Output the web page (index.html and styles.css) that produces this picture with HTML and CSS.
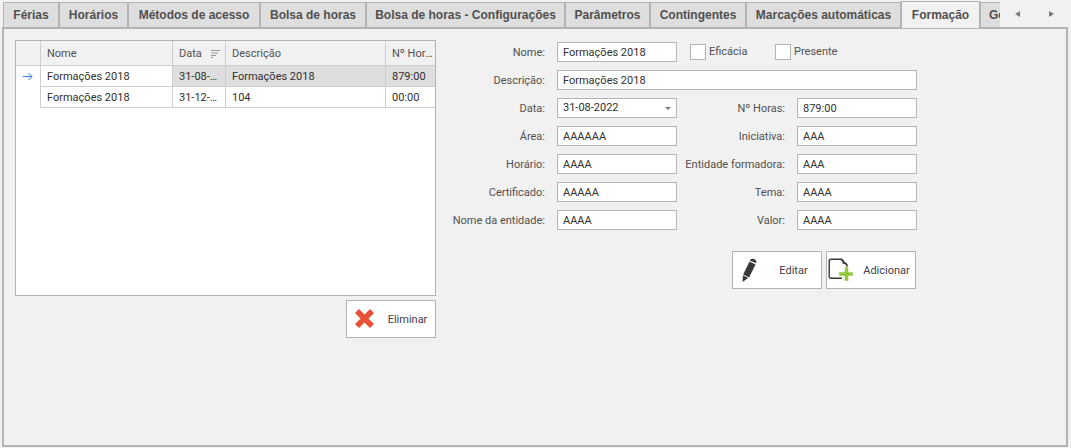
FILE: index.html
```html
<!DOCTYPE html>
<html lang="pt">
<head>
<meta charset="utf-8">
<title>Formação</title>
<link rel="stylesheet" href="styles.css">
</head>
<body>
<nav class="tabbar">
  <div class="tabs" role="tablist">
    <button class="tab" role="tab">Férias</button>
    <button class="tab" role="tab">Horários</button>
    <button class="tab" role="tab">Métodos de acesso</button>
    <button class="tab" role="tab">Bolsa de horas</button>
    <button class="tab" role="tab">Bolsa de horas - Configurações</button>
    <button class="tab" role="tab">Parâmetros</button>
    <button class="tab" role="tab">Contingentes</button>
    <button class="tab" role="tab">Marcações automáticas</button>
    <button class="tab tab-active" role="tab" aria-selected="true">Formação</button>
    <button class="tab tab-last" role="tab">Geral</button>
  </div>
  <div class="scrollers">
    <button class="scroller" aria-label="Anterior"><svg width="5" height="6" viewBox="0 0 5 6"><path d="M5 0v6L0 3z" fill="#7a7a7a"/></svg></button>
    <button class="scroller" aria-label="Seguinte"><svg width="5" height="6" viewBox="0 0 5 6"><path d="M0 0v6l5-3z" fill="#7a7a7a"/></svg></button>
  </div>
</nav>
<main class="panel">
  <section class="list">
    <div class="grid-box">
      <table class="grid">
        <colgroup><col class="c-mark"><col class="c-nome"><col class="c-data"><col class="c-desc"><col class="c-horas"></colgroup>
        <thead>
          <tr><th></th><th>Nome</th><th><span class="sorted">Data <svg width="9" height="8" viewBox="0 0 9 8"><path d="M0 .5h9M0 3h7M0 5.500h5M0 7.500h2" stroke="#999"/></svg></span></th><th>Descrição</th><th>Nº Horas</th></tr>
        </thead>
        <tbody>
          <tr class="selected"><td class="mark"><svg width="10" height="9" viewBox="0 0 10 9"><path d="M0 4.500h9M5.500 1L9 4.500 5.500 8" fill="none" stroke="#2f7bd9"/></svg></td><td class="focused">Formações 2018</td><td>31-08-2022</td><td>Formações 2018</td><td>879:00</td></tr>
          <tr><td class="mark"></td><td>Formações 2018</td><td>31-12-2018</td><td>104</td><td>00:00</td></tr>
        </tbody>
      </table>
    </div>
    <button class="action">
      <svg class="icon" width="24" height="24" viewBox="0 0 24 24"><path d="M3 6l4-4 5.500 5.500L18 2l4 4-5.500 5.500L22 17l-4 4-5.500-5.500L7 21l-4-4 5.500-5.500z" fill="#e95136"/></svg>
      <span>Eliminar</span>
    </button>
  </section>
  <form class="form">
    <div class="fields">
      <label for="nome">Nome:</label><input id="nome" class="field" value="Formações 2018">
      <div class="checks">
        <label class="check"><input type="checkbox" class="tick">Eficácia</label>
        <label class="check"><input type="checkbox" class="tick">Presente</label>
      </div>
      <label for="desc">Descrição:</label><input id="desc" class="field wide" value="Formações 2018">
      <label for="data">Data:</label><div class="combo"><select id="data" class="field"><option>31-08-2022</option></select></div>
      <label for="horas">Nº Horas:</label><input id="horas" class="field" value="879:00">
      <label for="area">Área:</label><input id="area" class="field" value="AAAAAA">
      <label for="inic">Iniciativa:</label><input id="inic" class="field" value="AAA">
      <label for="horario">Horário:</label><input id="horario" class="field" value="AAAA">
      <label for="ent">Entidade formadora:</label><input id="ent" class="field" value="AAA">
      <label for="cert">Certificado:</label><input id="cert" class="field" value="AAAAA">
      <label for="tema">Tema:</label><input id="tema" class="field" value="AAAA">
      <label for="nent">Nome da entidade:</label><input id="nent" class="field" value="AAAA">
      <label for="valor">Valor:</label><input id="valor" class="field" value="AAAA">
    </div>
    <div class="actions">
      <button type="button" class="action">
        <svg class="icon" width="24" height="26" viewBox="0 0 24 26"><path d="M12.500 2.500C13.500 .5 19 2.500 18.500 5L18 6 11.800 3.800zM11.400 4.800l6.200 2.400-6.500 13.300-5.900-3zM4.900 18.300l5.300 2.800L4.500 25z" fill="#383838"/></svg>
        <span>Editar</span>
      </button>
      <button type="button" class="action action-add">
        <svg class="icon" width="26" height="24" viewBox="0 0 26 24"><path d="M14 20.300H3q-1.800 0-1.800-1.800V3Q1.200 1.200 3 1.200H13L19 7v3" fill="none" stroke="#383838" stroke-width="1.400"/><path d="M13 1.200q3 1 2.300 3.800 2.700-.3 3.700 2" fill="none" stroke="#383838" stroke-width="1.400"/><path d="M16.500 9h4v5H25v4h-4.500v5h-4v-5H11v-4h5.500z" fill="#93c83e" stroke="#fff" stroke-width="0.500"/></svg>
        <span>Adicionar</span>
      </button>
    </div>
  </form>
</main>
</body>
</html>
```
FILE: styles.css
```css
* { box-sizing: border-box; }

body {
  margin: 0;
  padding: 1px 3px 1px 2px;
  min-height: 100vh;
  display: flex;
  flex-direction: column;
  background: #f1f1f1;
  color: #505050;
  font: 11px/14px Roboto, "Liberation Sans", sans-serif;
}

button, input, select { font: inherit; color: inherit; border-radius: 0; }
svg { display: block; }

.tabbar {
  display: flex;
  height: 27px;
  padding-left: 1px;
  margin-bottom: -1px;
  position: relative;
}

.tabs {
  flex: 1;
  min-width: 0;
  display: grid;
  grid-template-columns: 56px 69px 132px 106px 199px 85px 96px 155px 79px 60px;
  overflow: hidden;
}

.tab {
  margin: 1px 0 0;
  padding: 0;
  border: 1px solid #b3b3b3;
  background: #dedede;
  font: bold 12px/14px "Liberation Sans", Arial, sans-serif;
  white-space: nowrap;
}

.tab-active { margin-top: 0; border-bottom: 0; background: #f1f1f1; }
.tab-last { padding-left: 8px; text-align: left; }

.scrollers { display: flex; width: 68px; }

.scroller {
  flex: 1;
  display: flex;
  align-items: center;
  justify-content: center;
  padding: 0 0 2px;
  border: 0;
  background: none;
}

.panel {
  flex: 1;
  display: flex;
  align-items: flex-start;
  gap: 16px;
  padding: 11px;
  border: 2px solid #b3b3b3;
}

.list { display: flex; flex-direction: column; align-items: flex-end; gap: 4px; width: 421px; }
.grid-box { width: 100%; min-height: 256px; border: 1px solid #b3b3b3; background: #fff; }

.grid { width: 100%; table-layout: fixed; border-spacing: 0; color: #303030; }
.c-mark { width: 25px; }
.c-nome { width: 132px; }
.c-data { width: 53px; }
.c-desc { width: 160px; }

.grid th, .grid td {
  height: 21px;
  padding: 2px 5px 0 6px;
  border-right: 1px solid #cdcdcd;
  border-bottom: 1px solid #cdcdcd;
  font-weight: normal;
  text-align: left;
  overflow: hidden;
  white-space: nowrap;
  text-overflow: ellipsis;
}

.grid th { height: 25px; background: #f1f1f1; color: #505050; }
.grid th:last-child, .grid td:last-child { border-right: 0; padding-right: 1px; }
.grid .mark { border-bottom: 0; padding: 0 7px; background: #fff; }
.selected td { background: #dedede; }
.selected .focused { background: #fff; }
.sorted { display: flex; align-items: center; justify-content: space-between; }

.action {
  display: flex;
  align-items: center;
  gap: 4px;
  width: 90px;
  height: 38px;
  padding: 0 0 0 5px;
  border: 1px solid #b3b3b3;
  background: #fff;
  color: #404048;
}

.action span { flex: 1; padding-top: 1px; text-align: center; }
.action-add { padding-left: 1px; }

.form { padding-top: 2px; }

.fields {
  display: grid;
  grid-template-columns: 93px 120px 96px 120px;
  column-gap: 12px;
  grid-auto-rows: 20px;
  row-gap: 8px;
  align-items: center;
}

.fields > label { justify-self: end; padding-top: 1px; white-space: nowrap; }

.field {
  width: 100%;
  height: 20px;
  padding: 0 5px;
  border: 1px solid #b3b3b3;
  background: #fff;
  color: #303030;
  appearance: none;
}

.wide { grid-column: 2 / -1; }
.checks { grid-column: 3 / -1; display: flex; padding-left: 1px; }
.check { display: flex; align-items: center; gap: 3px; width: 85px; }

.tick {
  appearance: none;
  width: 16px;
  height: 16px;
  margin: 0;
  border: 1px solid #b3b3b3;
  background: #fff;
}

.combo { position: relative; }

.combo::after {
  content: "";
  position: absolute;
  right: 6px;
  top: 9px;
  border: 3px solid transparent;
  border-top-color: #777;
  border-bottom: 0;
  pointer-events: none;
}

.actions { display: flex; justify-content: flex-end; gap: 4px; margin-top: 21px; padding-right: 1px; }
```
